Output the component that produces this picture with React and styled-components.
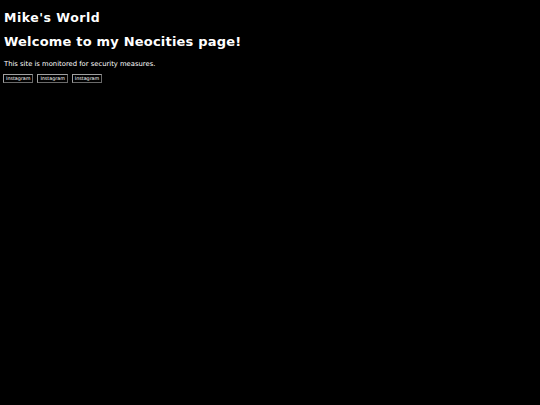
import React from 'react';
import styled, { createGlobalStyle } from 'styled-components';

const GlobalStyle = createGlobalStyle`
  html, body {
    margin: 0;
    background: #000000;
  }
  body {
    padding: 4px;
    font-family: "DejaVu Sans", Verdana, sans-serif;
    color: #ffffff;
  }
`;

const Title = styled.h1`
  font-size: 12.5px;
  letter-spacing: 0.5px;
  font-weight: bold;
  margin: 6px 0 0 0;
  line-height: 15px;
`;

const Heading = styled.h2`
  font-size: 13px;
  letter-spacing: 0.2px;
  font-weight: bold;
  margin: 9px 0 0 0;
  line-height: 16px;
`;

const Notice = styled.p`
  font-size: 6.8px;
  margin: 10px 0 0 0;
  line-height: 8px;
`;

const Links = styled.div`
  display: flex;
  gap: 4px;
  margin: 6px 0 0 -1px;
`;

const LinkButton = styled.a`
  display: inline-block;
  font-size: 4.8px;
  line-height: 5px;
  padding: 1px 2px;
  color: #ffffff;
  background: #000000;
  border-style: solid;
  border-width: 1px;
  border-color: #a0a0a0 #6a6a6a #6a6a6a #a0a0a0;
  text-decoration: none;
`;

export default function App() {
  const links = ['Instagram', 'Instagram', 'Instagram'];
  return (
    <>
      <GlobalStyle />
      <Title>Mike's World</Title>
      <Heading>Welcome to my Neocities page!</Heading>
      <Notice>This site is monitored for security measures.</Notice>
      <Links>
        {links.map((l, i) => (
          <LinkButton key={i} href="#">{l}</LinkButton>
        ))}
      </Links>
    </>
  );
}
